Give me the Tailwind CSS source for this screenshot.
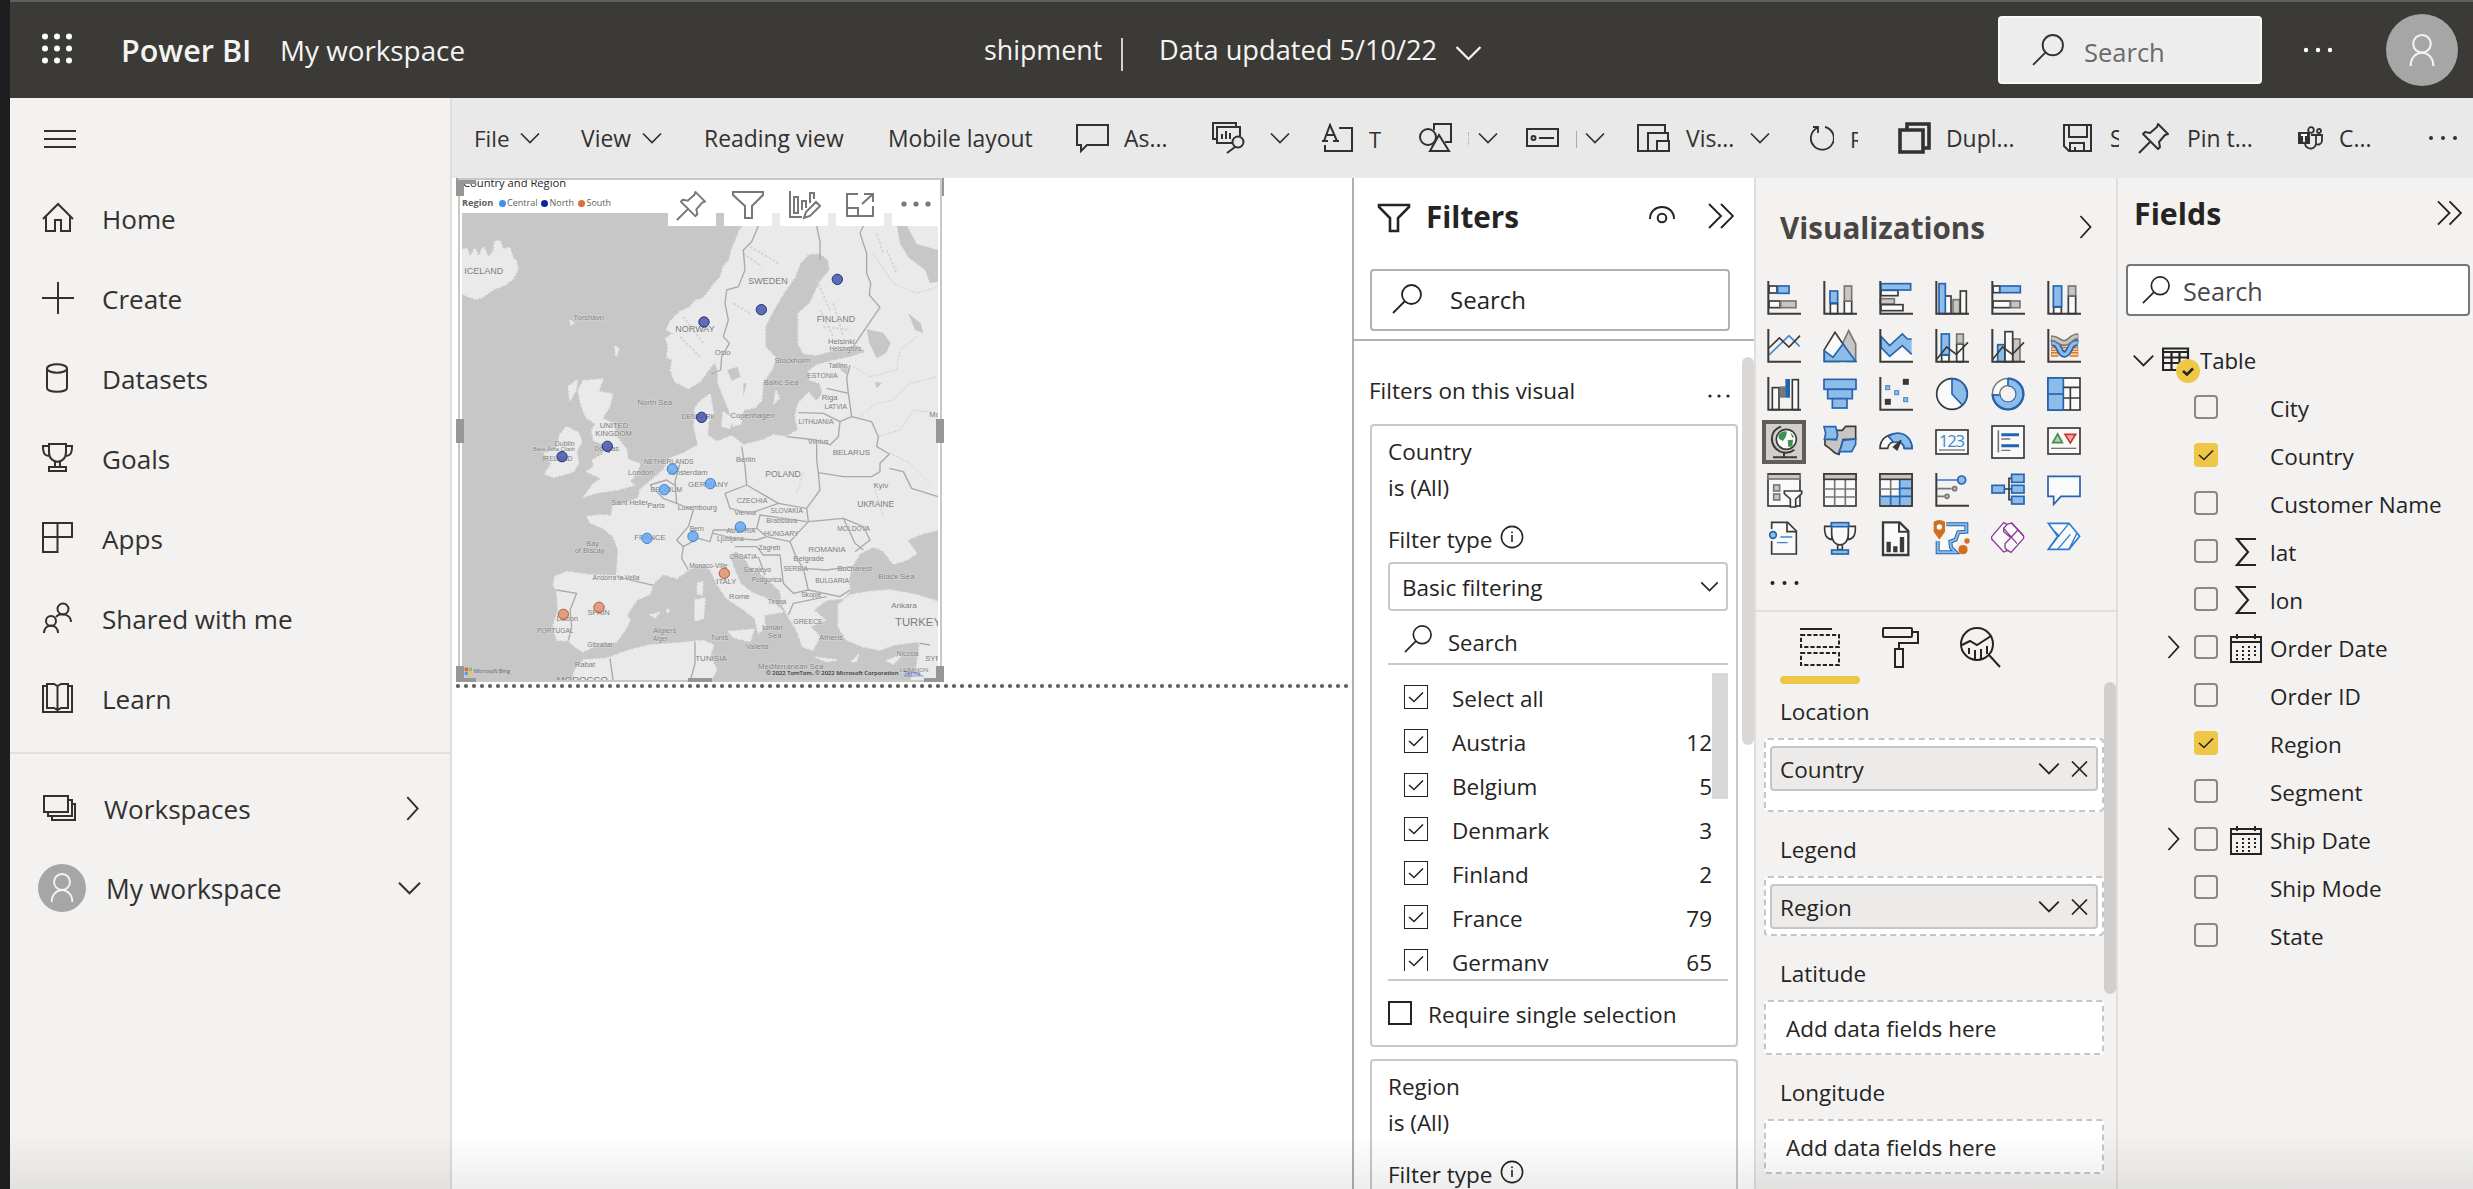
<!DOCTYPE html>
<html lang="en">
<head>
<meta charset="utf-8">
<title>Power BI - shipment</title>
<script src="https://cdn.jsdelivr.net/npm/@tailwindcss/browser@4"></script>
</head>
<body class="w-[2473px] h-[1189px] overflow-hidden bg-[#1c1e1f] font-['Open_Sans',sans-serif] text-[22.5px] text-[#252423] relative">
<svg width="0" height="0" class="absolute">
  <defs>
    <symbol id="down" viewBox="0 0 20 12"><path d="M1 1.5 10 10.5 19 1.5" fill="none" stroke="currentColor" stroke-width="1.7"/></symbol>
    <symbol id="right" viewBox="0 0 12 24"><path d="M1 1 11 12 1 23" fill="none" stroke="currentColor" stroke-width="1.8"/></symbol>
    <symbol id="dbl" viewBox="0 0 26 26"><path d="M1 1 13 13 1 25M13 1 25 13 13 25" fill="none" stroke="currentColor" stroke-width="1.9"/></symbol>
    <symbol id="search" viewBox="0 0 30 30"><g fill="none" stroke="currentColor" stroke-width="1.8"><circle cx="19.5" cy="10.5" r="9.5"/><path d="M12.5 17.5 1 29"/></g></symbol>
    <symbol id="person" viewBox="0 0 24 32"><g fill="none" stroke="currentColor" stroke-width="2"><circle cx="12" cy="9.5" r="8.5"/><path d="M1 31c0-17 22-17 22 0"/></g></symbol>
    <symbol id="pin" viewBox="0 0 32 32"><g fill="none" stroke="currentColor" stroke-width="2" stroke-linejoin="round"><path d="M20 2 30 12 27 13 21 20 22 25 20 27 5 12 7 10 12 11 19 5ZM1 31 12 20"/></g></symbol>
    <symbol id="funnel" viewBox="0 0 34 30"><path d="M2 2H32V4L21 15V28H13V15L2 4Z" fill="none" stroke="currentColor" stroke-width="2.6"/></symbol>
    <symbol id="check" viewBox="0 0 16 12"><path d="M1 6 6 10.5 15 1.5" fill="none" stroke="currentColor" stroke-width="1.6"/></symbol>
  </defs>
</svg>
<div class="ml-[10px] h-full flex flex-col">
  <header class="h-[98px] shrink-0 bg-[#3b3a37] border-t-2 border-[#5c6064] flex items-center text-[#f5f4f3] pb-[2px]">
    <svg class="w-[32px] h-[32px] ml-[31px] shrink-0" viewBox="0 0 32 32" fill="#fff"><circle cx="4" cy="3.500" r="3"/><circle cx="16" cy="3.500" r="3"/><circle cx="28" cy="3.500" r="3"/><circle cx="4" cy="15.500" r="3"/><circle cx="16" cy="15.500" r="3"/><circle cx="28" cy="15.500" r="3"/><circle cx="4" cy="27.500" r="3"/><circle cx="16" cy="27.500" r="3"/><circle cx="28" cy="27.500" r="3"/></svg>
    <span class="ml-[48px] w-[159px] shrink-0 text-[30.500px] font-semibold whitespace-nowrap mt-[3px]">Power BI</span>
    <span class="w-[704px] shrink-0 text-[27.800px] whitespace-nowrap mt-[3px]">My workspace</span>
    <span class="w-[137px] shrink-0 text-[26.800px] mt-[3px]">shipment</span>
    <span class="w-[2px] h-[33px] bg-[#d0cfcd] mt-[10px] mr-[36px] shrink-0"></span>
    <span class="w-[296px] shrink-0 text-[27.200px] whitespace-nowrap mt-[3px]">Data updated 5/10/22</span>
    <svg class="w-[27px] h-[16px] mt-[7px] shrink-0"><use href="#down"/></svg>
    <div class="ml-[516px] mt-[2px] w-[264px] h-[68px] shrink-0 bg-[#ededed] border-2 border-[#f8f8f7] rounded-[4px] flex items-center text-[#333]">
      <svg class="w-[32px] h-[32px] ml-[32px]"><use href="#search"/></svg>
      <span class="ml-[20px] mt-1 text-[25.500px] text-[#6b6a69]">Search</span>
    </div>
    <svg class="w-[32px] h-[6px] ml-[40px] mt-[2px] shrink-0" viewBox="0 0 32 6" fill="#fff"><circle cx="4" cy="3" r="2.200"/><circle cx="16" cy="3" r="2.200"/><circle cx="28" cy="3" r="2.200"/></svg>
    <span class="ml-[52px] mt-[2px] w-[72px] h-[72px] shrink-0 rounded-full bg-[#a6a6a6] flex items-center justify-center"><svg class="w-[28px] h-[33px]"><use href="#person"/></svg></span>
  </header>

  <div class="flex flex-1 min-h-0">
    <nav class="w-[442px] shrink-0 bg-[#f3f2f0] border-r-2 border-[#dedddc] text-[26.100px] text-[#323130]">
      <div class="h-[82px] pl-[34px] flex items-center"><svg class="w-[32px] h-[20px]" viewBox="0 0 32 20" stroke="#323130" stroke-width="2"><path d="M0 2H32M0 10H32M0 18H32"/></svg></div>
      <div id="nav"></div>
      <div class="mt-[12px] h-[2px] bg-[#e1dfdd]"></div>
      <div class="mt-[16px] h-[80px] flex items-center pl-[33px]">
        <svg class="w-[33px] h-[28px] -mt-1" viewBox="0 0 33 28" fill="none" stroke="#323130" stroke-width="2"><path d="M1 2H25V18H1ZM25 6H29V22H5V18M29 10H32V26H9V22"/></svg>
        <span class="ml-[28px] w-[302px]">Workspaces</span><svg class="w-[13px] h-[25px] -mt-1"><use href="#right"/></svg>
      </div>
      <div class="h-[80px] flex items-center pl-[28px]">
        <span class="w-[48px] h-[48px] rounded-full bg-[#a6a6a6] text-[#f5f4f3] flex items-center justify-center -mt-1"><svg class="w-[24px] h-[30px]"><use href="#person"/></svg></span>
        <span class="ml-[20px] w-[291px] text-[26.400px]">My workspace</span><svg class="w-[25px] h-[14px] -mt-1"><use href="#down"/></svg>
      </div>
    </nav>

    <div class="flex-1 min-w-0 flex flex-col">
      <div class="h-[80px] shrink-0 bg-[#e9e9e9] pl-[22px] flex items-center text-[22.900px] text-[#323130] whitespace-nowrap [&>div]:shrink-0 [&>div]:flex [&>div]:items-center [&_span]:shrink-0 [&_svg]:shrink-0 [&_span]:mt-[2px]">
        <div class="w-[107px]"><span class="w-[46px] text-[22.500px]">File</span><svg class="w-[20px] h-[12px]"><use href="#down"/></svg></div>
        <div class="w-[123px]"><span class="w-[61px]">View</span><svg class="w-[20px] h-[12px]"><use href="#down"/></svg></div>
        <div class="w-[184px]"><span>Reading view</span></div>
        <div class="w-[188px]"><span>Mobile layout</span></div>
        <div class="w-[136px]"><svg class="w-[33px] h-[30px]" viewBox="0 0 33 30" fill="none" stroke="currentColor" stroke-width="2"><path d="M1 2H32V22H11L5 28V22H1Z"/></svg><span class="ml-[15px]">As...</span></div>
        <div class="w-[109px]"><svg class="w-[33px] h-[32px]" viewBox="0 0 33 32" fill="none" stroke="currentColor" stroke-width="2"><path d="M5 17H1V1H24V4M20 21H5V5H28V14M10 17V12M14 17V9M18 17V11"/><circle cx="26" cy="20" r="5.500"/><path d="M23 25 15 31"/></svg><svg class="w-[20px] h-[12px] ml-[25px]"><use href="#down"/></svg></div>
        <div class="w-[98px]"><svg class="w-[33px] h-[30px]" viewBox="0 0 33 30" fill="none" stroke="currentColor" stroke-width="2"><path d="M18 5H31V28H4V22M1 18H7M12 18H18M3 18 9 2 16 18M6 12H13"/></svg><span class="ml-[15px] text-[22px]">T</span></div>
        <div class="w-[107px]"><svg class="w-[33px] h-[30px]" viewBox="0 0 33 30" fill="none" stroke="currentColor" stroke-width="2"><path d="M15 7V1H32V19H26"/><circle cx="9" cy="14" r="8"/><path d="M20 12 30 28H11Z"/></svg><span class="ml-[16px] h-[14px] border-l border-dotted border-[#aaa]"></span><svg class="w-[20px] h-[12px] ml-[9px]"><use href="#down"/></svg></div>
        <div class="w-[111px]"><svg class="w-[33px] h-[20px]" viewBox="0 0 33 20" fill="none" stroke="currentColor" stroke-width="2"><path d="M1 1H32V18H1ZM13 10H28"/><circle cx="7.500" cy="10" r="2"/></svg><span class="ml-[17px] h-[17px] border-l border-[#aaa]"></span><svg class="w-[20px] h-[12px] ml-[8px]"><use href="#down"/></svg></div>
        <div class="w-[172px]"><svg class="w-[33px] h-[30px]" viewBox="0 0 33 30" fill="none" stroke="currentColor" stroke-width="2"><path d="M28 9V2H1V28H11M11 28V10H31V17M11 28H20M20 28V18H32V28Z"/></svg><span class="ml-[16px] w-[64px]">Vis...</span><svg class="w-[20px] h-[12px]"><use href="#down"/></svg></div>
        <div class="w-[89px]"><svg class="w-[25px] h-[28px]" viewBox="0 0 25 28" fill="none" stroke="currentColor" stroke-width="1.800"><path d="M16 3A11.500 11.500 0 1 1 8 4M4 3H9V9"/></svg><span class="ml-[16px] w-[8px] overflow-hidden text-[22px]">R</span></div>
        <div class="w-[165px]"><svg class="w-[33px] h-[32px]" viewBox="0 0 33 32" fill="none" stroke="currentColor" stroke-width="3.600"><path d="M9 7V2H31V26H26M2 8H25V30H2Z"/></svg><span class="ml-[15px]">Dupl...</span></div>
        <div class="w-[75px]"><svg class="w-[30px] h-[30px]" viewBox="0 0 30 30" fill="none" stroke="currentColor" stroke-width="2"><path d="M1 2H28V28H6L1 23ZM6 2V14H24V2M7 28V20H21V28M12 28V24"/></svg><span class="ml-[17px] w-[9px] overflow-hidden">S</span></div>
        <div class="w-[160px]"><svg class="w-[32px] h-[32px]"><use href="#pin"/></svg><span class="ml-[17px]">Pin t...</span></div>
        <div class="w-[130px]"><svg class="w-[26px] h-[24px]" viewBox="0 0 26 24"><rect y="6" width="12" height="12" fill="#323130"/><path d="M3 9H9M6 9V16" stroke="#fff" stroke-width="1.800"/><g fill="none" stroke="#323130" stroke-width="1.800"><circle cx="13" cy="4" r="2.800"/><circle cx="21" cy="5" r="2"/><path d="M13 9H18V16A5.500 5.500 0 0 1 7 18M18 9H24V15A4 4 0 0 1 18 18"/></g></svg><span class="ml-[15px]">C...</span></div>
        <div><svg class="w-[32px] h-[6px]" viewBox="0 0 32 6" fill="#323130"><circle cx="3" cy="3" r="2"/><circle cx="15" cy="3" r="2"/><circle cx="27" cy="3" r="2"/></svg></div>
      </div>

      <div class="flex flex-1 min-h-0">
        <!-- report canvas -->
        <main class="w-[900px] shrink-0 bg-white pl-[6px]">
          <div class="w-[484px] h-[504px] border-2 border-[#c8c8c8] px-[2px] relative">
            <div class="h-[33px] overflow-hidden">
              <div class="text-[11.200px] leading-[16px] -mt-[5px] pl-[1px]">Country and Region</div>
              <div class="flex items-center text-[9px] leading-[18px] text-[#605e5c] mt-[3px]"><b class="font-bold w-[36.500px] text-[9.200px]">Region</b><i class="w-[7px] h-[7px] rounded-full bg-[#3b8ff5] mr-[1.500px]"></i><span class="w-[33.500px]">Central</span><i class="w-[7px] h-[7px] rounded-full bg-[#12239e] mr-[2px]"></i><span class="w-[28.500px]">North</span><i class="w-[7px] h-[7px] rounded-full bg-[#d9713f] mr-[1.500px]"></i><span>South</span></div>
            </div>
            <svg id="map" class="w-[476px] h-[467px] block bg-[#c7c7c7]" viewBox="36 129 1428 1401"></svg>
            <div class="absolute top-0 left-[208px] flex gap-[8px] text-[#777] [&>span]:w-[48px] [&>span]:h-[46px] [&>span]:bg-white [&>span]:flex [&>span]:items-center [&>span]:justify-center [&>span]:pt-[4px]">
              <span><svg class="w-[31px] h-[31px] -ml-[2px]"><use href="#pin"/></svg></span>
              <span><svg class="w-[32px] h-[28px]" viewBox="0 0 32 28" fill="none" stroke="currentColor" stroke-width="2"><path d="M1 1H31V4L20 15V27H13V15L1 4Z"/></svg></span>
              <span><svg class="w-[33px] h-[30px]" viewBox="0 0 33 30" fill="none" stroke="currentColor" stroke-width="2"><path d="M2 1V27H14M6 23V7H10V23ZM14 20V11H18V18M22 13V3H26V9M16 28 18 22 28 12 32 16 22 26Z"/></svg></span>
              <span><svg class="w-[30px] h-[26px]" viewBox="0 0 30 26" fill="none" stroke="currentColor" stroke-width="2"><path d="M13 2H2V24H28V14M2 16H13V24M19 2H28V10M28 2 17 12"/></svg></span>
              <span><svg class="w-[32px] h-[6px] -mt-[2px]" viewBox="0 0 32 6" fill="currentColor"><circle cx="4" cy="3" r="2.600"/><circle cx="16" cy="3" r="2.600"/><circle cx="28" cy="3" r="2.600"/></svg></span>
            </div>
            <svg class="absolute -left-[4px] -top-[2px] w-[488px] h-[504px]" viewBox="0 0 488 504" fill="#979797"><path d="M0 0H2V2H20V6H8V18H0ZM486 0H488V18H486ZM0 241H8V265H0ZM480 241H488V265H480ZM0 488H8V500H20V504H0ZM488 488H480V500H468V504H488ZM232 500H256V504H232Z"/></svg>
          </div>
          <svg class="w-[896px] h-[8px] block -ml-[2px]" viewBox="0 0 896 8"><path d="M2 4H896" stroke="#605e5c" stroke-width="4.200" stroke-linecap="round" stroke-dasharray="0 8"/></svg>
        </main>

        <!-- filters -->
        <aside class="w-[402px] shrink-0 bg-white border-l-2 border-[#b3aea9] relative overflow-hidden">
          <div class="h-[91px] pl-[23px] flex items-center pb-[16px]">
            <svg class="w-[34px] h-[30px] mt-[4px]"><use href="#funnel"/></svg>
            <span class="ml-[15px] w-[223px] text-[29.700px] font-bold mt-[4px]">Filters</span>
            <svg class="w-[26px] h-[18px] -mt-[1px]" viewBox="0 0 26 18" fill="none" stroke="currentColor" stroke-width="2"><path d="M1 13C1-3 25-3 25 13"/><circle cx="13" cy="12" r="4.300"/></svg>
            <svg class="w-[26px] h-[26px] ml-[33px] mt-[1px]"><use href="#dbl"/></svg>
          </div>
          <div class="ml-[16px] w-[360px] h-[62px] border-2 border-[#b3b0ad] rounded-[4px] flex items-center"><svg class="w-[30px] h-[30px] ml-[20px] -mt-[2px]"><use href="#search"/></svg><span class="ml-[28px] text-[24px]">Search</span></div>
          <div class="mt-[8px] h-[2px] bg-[#b3b0ad]"></div>
          <div class="mt-[32px] h-[36px] leading-[36px] pl-[15px] flex items-center"><span class="w-[338px]">Filters on this visual</span><svg class="w-[26px] h-[6px] mt-[10px]" viewBox="0 0 26 6" fill="currentColor"><circle cx="3" cy="3" r="1.600"/><circle cx="12" cy="3" r="1.600"/><circle cx="21" cy="3" r="1.600"/></svg></div>
          <section class="ml-[16px] mt-[15px] w-[368px] h-[623px] border-2 border-[#c8c8c8] rounded-[4px] px-[16px] pt-[8px] leading-[36px]">
            <div>Country</div><div>is (All)</div>
            <div class="mt-[16px] flex items-center"><span>Filter type</span><svg class="w-[24px] h-[24px] ml-[8px] -mt-[6px]" viewBox="0 0 24 24" fill="none" stroke="currentColor" stroke-width="1.600"><circle cx="12" cy="12" r="10.600"/><path d="M12 10V17M12 6.500V8.300"/></svg></div>
            <div class="mt-[4px] w-[340px] h-[49px] border-2 border-[#c8c8c8] rounded-[4px] flex items-center pl-[12px]"><span class="w-[298px] mt-[2px]">Basic filtering</span><svg class="w-[19px] h-[11px]"><use href="#down"/></svg></div>
            <div class="w-[340px] h-[54px] border-b-2 border-[#c8c8c8] flex items-center pl-[16px]"><svg class="w-[28px] h-[28px] mt-[3px]"><use href="#search"/></svg><span class="ml-[16px] mt-[9px] text-[22px]">Search</span></div>
            <div class="w-[340px] h-[306px] overflow-hidden pt-[10px] relative">
              <div id="countries"></div>
              <div class="absolute right-0 top-[8px] w-[16px] h-[126px] bg-[#d8d8d8]"></div>
            </div>
            <div class="mt-[8px] w-[340px] h-[2px] bg-[#c8c8c8]"></div>
            <div class="h-[64px] flex items-center"><i class="w-[24px] h-[24px] border-2 border-[#252423]"></i><span class="ml-[16px] mt-[4px] text-[22.600px]">Require single selection</span></div>
          </section>
          <section class="ml-[16px] mt-[12px] w-[368px] h-[400px] border-2 border-[#c8c8c8] rounded-[4px] px-[16px] pt-[8px] leading-[36px]">
            <div>Region</div><div>is (All)</div>
            <div class="mt-[16px] flex items-center"><span>Filter type</span><svg class="w-[24px] h-[24px] ml-[8px] -mt-[6px]" viewBox="0 0 24 24" fill="none" stroke="currentColor" stroke-width="1.600"><circle cx="12" cy="12" r="10.600"/><path d="M12 10V17M12 6.500V8.300"/></svg></div>
          </section>
          <div class="absolute right-0 top-[179px] w-[12px] h-[388px] rounded-full bg-[#d9d8d7]"></div>
        </aside>

        <!-- visualizations -->
        <aside class="w-[364px] shrink-0 bg-[#f3f2f1] border-x-2 border-[#e1dfdd] relative overflow-hidden">
          <div class="h-[98px] pl-[24px] pt-[3px] flex items-center"><span class="w-[299px] text-[29.600px] font-bold text-[#484644]">Visualizations</span><svg class="w-[13px] h-[24px] -mt-[3px]"><use href="#right"/></svg></div>
          <div id="viz" class="grid grid-cols-[repeat(6,56px)] auto-rows-[48px] pl-[6px]"></div>
          <svg class="w-[34px] h-[6px] ml-[14px] mt-[16px] block" viewBox="0 0 34 6" fill="#252423"><circle cx="2.500" cy="3" r="2"/><circle cx="14.500" cy="3" r="2"/><circle cx="26.500" cy="3" r="2"/></svg>
          <div class="mt-[24px] h-[2px] bg-[#e1dfdd]"></div>
          <div class="h-[72px] flex pl-[24px] relative">
            <div class="w-[80px] flex flex-col items-center pt-[16px]"><svg class="w-[40px] h-[38px]" viewBox="0 0 40 38" fill="none" stroke="#252423" stroke-width="2"><path d="M0 1H32"/><path d="M1 7H39V19H1ZM1 25H39V37H1Z" stroke-dasharray="4.200 2"/></svg><i class="mt-[10px] w-[80px] h-[8px] rounded-full bg-[#eec746]"></i></div>
            <svg class="w-[37px] h-[42px] ml-[22px] mt-[15px]" viewBox="0 0 37 42" fill="none" stroke="#252423" stroke-width="2"><rect x="1" y="1" width="29" height="9" rx="1"/><path d="M30 5H36V16H17V22"/><rect x="13" y="22" width="8" height="18"/></svg>
            <svg class="w-[41px] h-[42px] ml-[41px] mt-[15px]" viewBox="0 0 41 42" fill="none" stroke="#252423" stroke-width="2"><circle cx="17" cy="17" r="16"/><path d="M29 28 40 40M2 18 10 14 17 18 31 9M9 27V21M15 32V23M21 32V22M27 27V19"/></svg>
          </div>
          <div id="wells" class="pl-[8px]"></div>
          <div class="absolute right-0 top-[504px] w-[12px] h-[312px] rounded-full bg-[#d0cfcd]"></div>
        </aside>

        <!-- fields -->
        <aside class="flex-1 min-w-0 bg-[#f3f2f1] overflow-hidden">
          <div class="h-[86px] flex items-center pl-[16px]"><span class="w-[303px] text-[30.300px] font-bold -mt-[14px]">Fields</span><svg class="w-[25px] h-[26px] -mt-[17px]"><use href="#dbl"/></svg></div>
          <div class="ml-[8px] w-[344px] h-[52px] border-2 border-[#777] rounded-[4px] bg-white flex items-center"><svg class="w-[28px] h-[28px] ml-[14px]"><use href="#search"/></svg><span class="ml-[13px] mt-[4px] text-[25.200px] text-[#4a4948]">Search</span></div>
          <div class="mt-[20px] h-[48px] flex items-center pl-[14px]"><svg class="w-[23px] h-[13px]"><use href="#down"/></svg>
            <svg class="w-[38px] h-[38px] ml-[7px] mt-[10px]" viewBox="0 0 38 38"><path d="M1 2.500H26V24H1ZM1 6H26M1 11.500H26M1 17H26M9.500 6V24M17.500 6V24" fill="none" stroke="#252423" stroke-width="2.200"/><circle cx="26" cy="25" r="12" fill="#eec746"/><path d="M21 25 25 28.500 31 22.500" fill="none" stroke="#252423" stroke-width="2.600"/></svg>
            <span class="mt-[2px] text-[22.200px]">Table</span></div>
          <div id="fields"></div>
        </aside>
      </div>
    </div>
  </div>
</div>
<div class="absolute bottom-0 left-[10px] right-0 h-[56px] bg-gradient-to-b from-black/0 to-black/7"></div>

<script>
const $ = id => document.getElementById(id);

/* left navigation */
const nav = [
  ['Home','<path d="M1 17 16 2 31 17M4 14V29H13V18H19V29H28V14"/>'],
  ['Create','<path d="M16 0V32M0 16H32"/>'],
  ['Datasets','<ellipse cx="15" cy="6.500" rx="10" ry="4.200"/><path d="M5 6.500V26C5 31 25 31 25 26V6.500"/>'],
  ['Goals','<path d="M7 2H24V10C24 23 7 23 7 10ZM7 4H1C1 12 3 14 8 14M24 4H30C30 12 28 14 23 14M13 20V24M18 20V24M7 29V25H24V29Z"/>'],
  ['Apps','<path d="M1 1H30V15H1ZM15.500 1V30H1V15"/>'],
  ['Shared with me','<circle cx="21" cy="7" r="5.500"/><path d="M14 15C18 10 29 12 29 20"/><circle cx="9" cy="19" r="5"/><path d="M2 31C2 21 16 21 16 31"/>'],
  ['Learn','<path d="M5 4H1V30H30V4H26M5 2H12L15.500 4 19 2H26V26H19L15.500 28 12 26H5ZM15.500 4V28"/>']];
$('nav').innerHTML = nav.map(([t,p]) => `<div class="h-[80px] flex items-center pl-[32px]"><svg class="w-[32px] h-[32px] -mt-1 shrink-0" viewBox="0 0 32 32" fill="none" stroke="#323130" stroke-width="2">${p}</svg><span class="ml-[28px]">${t}</span></div>`).join('');

/* country filter values */
$('countries').innerHTML = [['Select all',''],['Austria',12],['Belgium',5],['Denmark',3],['Finland',2],['France',79],['Germany',65]].map(([t,n]) =>
 `<div class="h-[44px] flex items-center pl-[16px]"><i class="w-[24px] h-[24px] border-[1.500px] border-[#252423] flex items-center justify-center"><svg class="w-[16px] h-[12px]"><use href="#check"/></svg></i><span class="ml-[24px] mt-[4px] w-[190px]">${t}</span><span class="w-[70px] mt-[4px] text-right">${n}</span></div>`).join('');

/* field wells */
const pill = t => `<div class="mx-[4px] mt-[6px] h-[45px] w-[328px] border-2 border-[#c8c6c4] rounded-[4px] bg-[#edebe9] flex items-center pl-[8px]"><span class="w-[257px] mt-[3px]">${t}</span><svg class="w-[24px] h-[13px]"><use href="#down"/></svg><svg class="w-[17px] h-[16px] ml-[10px]" viewBox="0 0 17 16"><path d="M1 0.500 16 15.500M16 0.500 1 15.500" stroke="#252423" stroke-width="1.700"/></svg></div>`;
const empty = '<div class="pl-[20px] pt-[3px] h-full flex items-center">Add data fields here</div>';
$('wells').innerHTML = [['Location','h-[74px]',pill('Country')],['Legend','h-[60px]',pill('Region')],['Latitude','h-[55px]',empty],['Longitude','h-[55px]',empty]].map(([t,h,c]) =>
 `<div class="pt-[10px] pb-[10px]"><div class="pl-[16px] leading-[36px] mb-[8px]">${t}</div><div class="w-[340px] ${h} bg-white border-2 border-dashed border-[#c8c6c4] rounded-[4px]">${c}</div></div>`).join('');

/* fields list */
const sigma = '<svg class="w-[32px] h-[30px]" viewBox="0 0 32 30"><path d="M26 2H7L18 15 7 28H26" fill="none" stroke="#252423" stroke-width="2.200"/></svg>';
const cal = '<svg class="w-[32px] h-[30px]" viewBox="0 0 32 30" fill="none" stroke="#252423" stroke-width="2"><path d="M1 4H31V29H1ZM1 9H31M7 1V6M25 1V6"/><path d="M7 17V27M13 13V27M19 13V27M25 13V24" stroke-dasharray="2 2"/></svg>';
$('fields').innerHTML = [['City'],['Country',1],['Customer Name'],['lat',0,sigma],['lon',0,sigma],['Order Date',0,cal,1],['Order ID'],['Region',1],['Segment'],['Ship Date',0,cal,1],['Ship Mode'],['State']].map(([t,on,ic,ex]) =>
 `<div class="h-[48px] flex items-center pl-[49px]"><span class="w-[27px] pb-[2px]">${ex?'<svg class="w-[13px] h-[24px]"><use href="#right"/></svg>':''}</span>${on?'<i class="w-[24px] h-[24px] -mt-[2px] rounded-[4px] bg-[#eec746] flex items-center justify-center"><svg class="w-[16px] h-[12px]"><use href="#check"/></svg></i>':'<i class="w-[24px] h-[24px] -mt-[2px] rounded-[4px] border-2 border-[#8a8886]"></i>'}<span class="ml-[12px] w-[40px]">${ic||''}</span><span class="whitespace-nowrap mt-[2px]">${t}</span></div>`).join('');

/* visual gallery, each glyph on a 102 unit square */
const D='#3b3a39', G='#797775', B='#2464b0', b='#8dbce8', g='#c8c6c4', w='#fafafa', L='#3f87c9';
const r=(x,y,W,H,f,s,k=5)=>`<rect x="${x}" y="${y}" width="${W}" height="${H}" fill="${f}" stroke="${s}" stroke-width="${k}"/>`;
const p=(d,f,s,k=5)=>`<path d="${d}" fill="${f}" stroke="${s}" stroke-width="${k}"/>`;
const c=(x,y,R,f,s,k=5)=>`<circle cx="${x}" cy="${y}" r="${R}" fill="${f}" stroke="${s}" stroke-width="${k}"/>`;
const ax=p('M4 0V98H102','none',D,6);
const ln=p('M4 92 35 54 64 76 99 40','none',D);
const viz=[
 r(6,15,24,21,w,D)+r(32,15,34,22,b,B)+r(6,60,33,20,w,D)+r(41,60,46,20,g,G)+ax,
 r(22,68,22,30,w,D)+r(21,30,23,36,b,B)+r(64,60,22,38,w,D)+r(64,15,22,45,g,G)+ax,
 r(6,28,51,16,w,D)+r(4,53,42,16,g,G)+r(6,71,66,18,w,D)+r(5,8,90,19,b,B)+ax,
 r(30,45,18,53,w,D)+r(54,56,20,42,g,G)+r(76,30,18,68,w,D)+r(12,8,19,90,b,B)+ax,
 r(6,15,20,20,w,D)+r(27,15,61,20,b,B)+r(6,60,52,20,w,D)+r(59,60,28,20,g,G)+ax,
 r(20,78,23,20,w,D)+r(19,15,25,62,b,B)+r(64,45,22,53,w,D)+r(64,15,22,29,g,G)+ax,
 p('M6 78 66 20 98 52','none',L)+p('M6 57 37 27 66 54 99 20','none',D)+ax,
 p('M58 45 77 5 98 45V97H70Z',g,G)+p('M4 97V62L36 10 62 48 50 97Z',w,D)+p('M4 97V65L30 85 60 45 98 97Z',b,B),
 `<path d="M6 50 32 82 70 50 100 75V98H6Z" fill="${w}"/>`+p('M98 30H85L70 15 32 50 6 22V55L32 82 70 50 98 76',b,B)+ax,
 r(20,78,22,20,w,D)+r(19,15,24,62,b,B)+r(65,45,20,53,w,D)+r(65,15,20,28,g,G)+ln+ax,
 r(20,47,22,51,b,B)+r(66,30,21,68,g,G)+r(42,8,23,90,w,D)+ln+ax,
 p('M12 60H32M40 60H62M70 60H94M12 76H34M68 76H94','none','#d9772b',14)+p('M14 60H30M42 60H60M72 60H92M14 76H32M70 76H92','none','#fbd9a5',5)+p('M12 42C40 38 34 76 52 76S66 38 94 42','none',B,20)+p('M14 42C40 38 34 76 52 76S66 38 92 42','none',b,10)+p('M12 28C35 28 34 42 52 42S70 22 94 22','none',G,19)+p('M14 28C35 28 34 42 52 42S70 22 92 22','none',g,9)+ax,
 r(16,32,20,66,w,D)+`<rect x="38" y="28" width="18" height="34" fill="${G}"/><rect x="55" y="6" width="14" height="56" fill="${B}"/>`+r(76,8,18,90,w,D)+ax,
 r(3,7,96,30,b,B)+r(14,37,74,28,b,B)+r(28,65,44,28,b,B),
 ax+r(74,8,13,13,D,D)+r(20,26,12,12,b,L,3)+r(47,41,12,12,b,L,3)+r(74,62,12,12,b,L,3)+r(20,68,13,13,D,D),
 c(51,51,46,w,D)+p('M51 5A46 46 0 0 1 82 84L51 51Z',b,B),
 c(51,51,36,'none',G,26)+c(51,51,36,'none',w,17)+p('M51 15A36 36 0 1 1 15 51','none',B,27)+p('M51 17A34 34 0 1 1 17 51','none',b,17)+p('M4 54H26','none',B)+p('M51 3V26','none',B),
 r(3,3,96,96,w,D)+r(3,3,46,96,b,B)+p('M3 51H49','none',B)+p('M49 31H99M49 63H70M70 63H99M70 31V99','none',D),
 c(58,43,30,w,D)+`<path d="M34 30C42 20 52 16 60 20L56 36 48 48 36 42ZM62 46 78 44 76 64 64 66ZM70 22 82 36 76 38Z" fill="#3f8f4f"/>`+p('M42 5C8 16 4 62 40 80C58 86 72 82 82 74M51 82V96M18 97H90','none',D,6),
 p('M40 16H58L68 4H98V42L60 44 48 88 36 84 20 70 6 60V42L40 44Z',g,D)+p('M3 5H38L44 30 40 43H4L8 25Z',b,B)+p('M60 46 98 42V58L86 80H48L54 68Z',b,B),
 p('M3 70C3 12 99 12 99 70H76C72 42 30 42 26 70Z',w,D)+p('M28 34C60 12 98 30 99 70H76C74 56 64 48 44 52Z',b,B)+p('M44 66 66 46 54 74Z',D,D),
 r(3,15,96,72,w,D)+`<text x="51" y="67" text-anchor="middle" font-size="50" fill="${L}" textLength="78" font-family="Open Sans, sans-serif">123</text>`+p('M12 75H90','none',G,4),
 r(3,3,96,96,w,D)+p('M22 16V82','none',G)+p('M31 29H84M31 62H84','none',B,9)+p('M31 42H58M31 76H58','none',G,4),
 r(3,9,96,78,w,D)+p('M17 53 32 27 46 53Z','#a7d6a4','#3f8f4f')+p('M54 28H86L70 54Z','#f2aaa8','#c9342c')+p('M12 70H88','none',G,4),
 r(3,3,96,96,w,D)+r(3,3,96,15,g,G)+r(20,36,18,18,g,G)+r(20,63,18,18,g,G)+p('M52 54H104V62L86 78V102H70V78L52 62Z',w,D)+p('M3 3H99','none',D),
 r(3,3,96,96,w,D)+p('M3 48H99M3 72H99M35 18V99M67 18V99','none',G)+r(3,3,96,16,g,D),
 r(3,3,96,96,w,D)+p('M3 48H60M35 18V70','none',G)+`<path d="M62 20H97V97H5V70H62Z" fill="${b}"/>`+p('M5 70H97M62 20V97M35 70V97M62 46H97','none',B)+r(3,3,96,16,g,D)+p('M99 18V99H3','none',D),
 ax+p('M6 21H66','none',L)+c(80,21,12,b,B)+p('M6 47H50M6 70H28','none',G)+c(59,47,6,g,G)+c(36,70,6,g,G),
 p('M40 48H56M64 16H54V80H64M54 48H64','none',D)+r(3,37,37,23,b,B)+r(62,4,37,24,b,B)+r(62,37,37,23,b,B)+r(62,70,37,23,b,B),
 p('M3 10H99V70H42L20 94V70H3Z',w,B),
 p('M14 4H62L88 30V99H14Z',w,D)+p('M60 4V32H88','none',D)+`<rect x="8" y="24" width="10" height="36" fill="#f3f2f1"/>`+c(18,42,10,b,B)+p('M40 48H76M30 65H62','none',L,4),
 p('M26 12V40C26 82 76 82 76 40V12ZM26 16H5C4 40 8 54 30 56M76 16H97C98 40 94 54 72 56M44 72V86H58V72',w,D)+r(25,5,52,12,b,B)+r(26,87,50,12,b,B),
 p('M12 4H62L88 30V102H12Z',w,D,7)+p('M60 4V32H86','none',D,6)+p('M29 94V62M49 94V76M69 94V48','none',D,13),
 `<path d="M36 6H99V40L78 50 68 66 56 76 60 98H6V50L40 60Z" fill="${w}"/>`+p('M34 10H94V32L70 34 62 56 46 62 48 80 62 94H8V60','none',B,12)+p('M34 10H94V32L70 34 62 56 46 62 48 80 62 94H8V60','none',b,6)+`<path d="M-4 2Q13-8 30 2V32L13 56-4 32Z" fill="#d0701f"/><circle cx="13" cy="18" r="8" fill="#fff"/><circle cx="84" cy="86" r="14" fill="#d0701f"/><circle cx="96" cy="60" r="8" fill="#d0701f"/>`,
 p('M38 5 2 47 2 54 38 93 50 88 60 94 98 52V45L62 6 48 10Z',w,'#8a3a9a',4)+p('M48 10 38 22 78 68M62 6 98 45M80 28 42 68V80L50 90M38 22V32L60 50','none','#8a3a9a',4),
 p('M4 7H66L98 46 66 85H4L32 46Z',w,'#2b7cd3')+p('M22 30 38 46M32 85 70 40M66 7 36 44 4 85M66 85 90 36','none','#2b7cd3',4)];
$('viz').innerHTML = viz.map((s,i) => i===18
 ? `<div class="flex items-center justify-center w-[44px] h-[44px] border-4 border-[#605e5c] bg-[#d0cfcd]"><svg class="w-[34px] h-[34px] shrink-0" viewBox="0 0 102 102">${s}</svg></div>`
 : `<div class="pl-[5px] pt-[5px]"><svg class="w-[34px] h-[34px] overflow-visible" viewBox="0 0 102 102">${s}</svg></div>`).join('');

/* map of Europe */
const land = [
 'M36 240 50 235 60 262 75 235 85 262 100 230 115 262 130 245 135 215 150 212 160 240 178 232 188 262 200 275 203 300 190 325 165 345 130 358 100 380 80 388 50 378 36 370Z',
 'M905 129 870 180 845 240 838 270 820 290 812 320 790 345 760 385 735 392 720 412 690 425 660 455 650 480 672 490 648 505 655 530 650 560 668 570 662 600 675 635 715 655 750 635 775 600 795 575 803 600 805 640 825 690 845 740 850 768 872 762 880 720 915 712 935 690 938 640 965 598 978 565 945 530 945 470 965 430 1000 370 1035 320 1050 280 1075 252 1110 250 1135 270 1140 300 1110 335 1080 400 1045 430 1045 520 1060 550 1100 555 1150 540 1220 525 1250 545 1200 562 1150 572 1100 585 1075 605 1080 630 1110 640 1118 670 1100 695 1075 668 1045 700 1035 740 1045 780 1010 800 970 795 940 810 880 825 845 798 800 815 772 795 775 755 790 730 780 672 750 695 735 715 732 770 745 825 700 850 660 865 640 900 600 935 570 960 565 985 510 1003 488 1008 485 1038 450 1035 412 1040 420 1058 460 1075 490 1100 505 1140 500 1218 420 1215 350 1205 315 1220 310 1245 320 1260 325 1320 310 1365 320 1410 355 1412 375 1430 400 1445 440 1425 500 1415 525 1380 540 1350 530 1335 560 1290 600 1272 610 1240 640 1212 680 1225 715 1200 750 1180 782 1200 800 1240 830 1285 880 1318 915 1345 925 1390 945 1370 942 1335 1000 1325 960 1290 905 1268 870 1240 850 1190 840 1160 855 1142 878 1155 900 1190 945 1220 990 1262 1000 1310 1015 1340 1040 1380 1058 1430 1088 1440 1110 1400 1080 1370 1125 1350 1090 1320 1130 1290 1180 1285 1200 1262 1195 1230 1205 1190 1230 1150 1270 1130 1300 1142 1330 1182 1370 1170 1400 1150 1370 1110 1420 1090 1464 1080V129Z',
 'M1165 1305 1200 1275 1260 1265 1320 1260 1400 1275 1464 1295V1425L1400 1415 1330 1425 1290 1440 1240 1430 1190 1410 1165 1370Z',
 'M1410 1420H1464V1536H1380L1400 1490Z','M1310 1472 1355 1455 1330 1482Z',
 'M365 1536 375 1500 400 1470 470 1465 540 1440 600 1425 680 1420 760 1412 790 1425 780 1460 800 1500 780 1536Z',
 'M835 1385 912 1378 900 1415 850 1402Z','M735 1290 765 1285 760 1345 735 1352Z','M743 1240 758 1235 756 1275 742 1270Z','M1098 1462 1160 1470 1130 1475Z','M1205 1475 1225 1455 1218 1475Z',
 'M400 632 458 628 445 665 487 672 478 712 455 745 488 760 500 800 530 840 532 868 570 882 560 910 538 935 553 945 500 960 440 968 402 980 430 942 455 925 410 905 432 890 428 870 460 852 462 822 432 812 425 780 438 762 408 742 392 700 385 660Z',
 'M355 650 382 630 378 660 360 690Z','M330 795 350 770 385 788 395 815 380 842 385 880 370 905 310 922 285 912 305 880 283 850 318 840Z',
 'M820 728 852 745 838 775 815 768Z','M978 662 988 685 972 700Z','M495 530 507 535 498 560ZM360 452 372 458 364 465ZM600 1335 628 1328 615 1342ZM650 1318 660 1322 652 1328Z'];
const sea = ['M1335 135 1370 165 1400 222 1464 240V335L1440 340 1425 300 1375 262 1350 220Z','M1250 478 1300 488 1322 520 1308 550 1280 565 1258 520Z','M1375 430 1412 460 1420 490 1395 480Z','M832 600 862 590 872 620 845 632Z','M880 640 890 640 880 680Z','M1165 575 1195 590 1190 615 1172 600Z','M1275 635 1295 640 1280 655Z','M1205 1255 1235 1265 1200 1272Z'];
const border = 'M925 168 905 215 880 240 885 300 865 350 830 360 825 400 835 450 820 500 838 520 815 560 812 600 785 612M1100 168 1110 215V270M1240 168 1230 190 1250 250 1250 310 1262 340 1258 375 1290 412 1240 485 1210 530M1200 585 1190 625 1195 670 1130 655M1195 670 1205 740 1170 755 1120 730 1045 728M1170 755 1165 800 1140 825 1100 810 1010 800M1205 740 1265 755 1285 800 1280 830 1318 852 1290 880V905L1265 920 1180 920 1105 908 1100 870 1100 810M1318 895 1360 905 1385 955 1464 980M875 830 885 890 890 945 825 970 840 1015 900 1030 985 1000 890 945M985 1000 1070 1015 1110 960 1105 908M1070 1015 1075 1055 1020 1115 950 1100 920 1075 930 1035 1070 1055M1075 1055 1180 1045 1215 1120 1240 1140M1180 1045 1240 1070 1260 1110 1215 1145M1020 1115 1040 1165 1060 1195 1130 1200 1205 1190M1060 1195 1075 1260 1170 1280 1200 1260M715 1070 730 1020 680 1000 675 935 690 880M600 945 650 930 680 950M600 945 640 985 680 1000M715 1070 680 1110 700 1130 745 1105 780 1115 790 1080 860 1080 920 1075M790 1090 850 1105 920 1110 950 1100M700 1130 695 1165 715 1200M320 1260 380 1270 360 1320 365 1370 355 1412M500 1220 610 1246M480 1465 490 1536M735 1415 735 1480 720 1536M855 1130 920 1130 940 1155 990 1155 1000 1240M925 1160 945 1215M1000 1240 1030 1270 1075 1260M1015 1335 1030 1300 1130 1280M1410 1420 1440 1425M1380 1500 1420 1520';
const soft='M1210 590 1260 620 1340 600 1350 540 1400 500M1230 740 1280 700 1330 690 1380 640 1464 620M1285 800 1350 780 1390 720 1464 730M1320 850 1380 880 1440 940M1270 250 1330 340 1400 370 1464 350M1060 905 1040 970M1270 940 1300 1040';
const labels=[['ICELAND',101,313,27],['Tórshavn',416,451,22],['NORWAY',735,487,27],['SWEDEN',954,343,27],['FINLAND',1158,457,27],['Helsinki',1174,521,23],['Helsingfors',1186,544,19],['Oslo',818,555,23],['Stockholm',1027,580,23],['Tallinn',1164,595,20],['ESTONIA',1117,624,21],['Baltic Sea',993,645,23],['North Sea',614,704,23],['Riga',1139,690,23],['LATVIA',1157,717,20],['DENMARK',745,747,20],['Copenhagen',907,745,23],['LITHUANIA',1098,763,20],['Vilnius',1105,822,21],['UNITED',492,774,23],['KINGDOM',491,798,23],['Dublin',344,827,21],['Baile Átha Cliath',312,843,17],['IRELAND',322,873,21],['Douglas',470,842,20],['BELARUS',1204,855,24],['NETHERLANDS',656,881,20],['Amsterdam',714,916,23],['Berlin',887,876,23],['London',572,914,23],['POLAND',999,922,26],['GERMANY',775,951,24],['BELGIUM',649,966,21],['Kyiv',1293,955,23],['CZECHIA',906,999,21],['UKRAINE',1277,1011,25],['Saint Helier',539,1005,21],['Paris',618,1014,23],['Luxembourg',742,1020,21],['SLOVAKIA',1010,1029,20],['Vienna',885,1034,21],['Bratislava',995,1059,21],['HUNGARY',994,1097,21],['AUSTRIA',873,1088,20],['MOLDOVA',1211,1083,20],['FRANCE',600,1111,23],['Bern',740,1083,20],['Ljubljana',841,1112,20],['Zagreb',958,1139,21],['ROMANIA',1131,1146,24],['CROATIA',880,1167,19],['Belgrade',1076,1172,23],['Monaco-Ville',775,1193,20],['SERBIA',1037,1202,20],['Sarajevo',922,1205,21],['Bucharest',1214,1202,23],['Black Sea',1339,1227,24],['BULGARIA',1146,1239,20],['Podgorica',950,1235,20],['ITALY',829,1242,23],['Bay',428,1127,22],['of Biscay',419,1149,22],['Andorra la Vella',498,1231,20],['Rome',868,1288,23],['Skopje',1084,1282,20],['Tirana',981,1303,20],['Ankara',1362,1314,24],['Lisbon',352,1352,22],['SPAIN',446,1335,23],['PORTUGAL',316,1388,20],['GREECE',1074,1362,21],['TURKEY',1404,1368,34],['Ionian',967,1379,23],['Sea',974,1403,23],['Athens',1143,1409,23],['Algiers',644,1390,23],['Alger',631,1413,19],['Gibraltar',450,1430,20],['Tunis',808,1410,22],['Valletta',922,1438,21],['Rabat',405,1491,23],['TUNISIA',783,1474,24],['Mediterranean Sea',1022,1498,23],['Nicosia',1373,1459,20],['LEBANON',1392,1505,18],['SYF',1448,1474,23],['MOROCCO',397,1540,29],['Mo',1454,741,23]];
const dots=[[762,456,0],[934,419,0],[1162,328,0],[755,742,0],[472,829,0],[336,860,0],[667,897,1],[781,941,1],[643,959,1],[871,1071,1],[729,1099,1],[591,1105,1],[823,1210,2],[447,1312,2],[340,1333,2]];
const col=[['#4557ae','#232f7c'],['#6aa9f4','#3f82cc'],['#e0916f','#b05a36']];
$('map').innerHTML =
 land.map(d=>`<path d="${d}" fill="#eaeaea" stroke="#eaeaea" stroke-width="5" stroke-linejoin="round" stroke-dasharray="9 4 5 3"/>`).join('')+
 sea.map(d=>`<path d="${d}" fill="#c7c7c7"/>`).join('')+
 `<path d="M880 250 935 290M900 230 985 280M850 400 900 430M1100 330 1140 420M1110 420 1150 500M700 440 760 520M690 500 750 560M1280 190 1300 250M1310 240 1340 310M1120 470 1200 480M1150 400 1180 500" stroke="#d2d2d2" stroke-width="5" stroke-dasharray="8 5" fill="none"/>`+
 `<path d="${soft}" fill="none" stroke="#cfcfcf" stroke-width="3" stroke-dasharray="6 4"/><path d="${border}" fill="none" stroke="#a9a9a9" stroke-width="4" stroke-linejoin="round"/>`+
 labels.map(([t,x,y,s])=>`<text x="${x}" y="${y}" font-size="${s}" text-anchor="middle" font-family="Liberation Sans, sans-serif" fill="#7d7d7d" stroke="#ececec" stroke-opacity=".55" stroke-width="3" paint-order="stroke">${t}</text>`).join('')+
 dots.map(([x,y,k])=>`<circle cx="${x}" cy="${y}" r="15.500" fill="${col[k][0]}" fill-opacity=".85" stroke="${col[k][1]}" stroke-width="3"/>`).join('')+
 `<rect x="44" y="1493" width="10" height="10" fill="#e2643a"/><rect x="56" y="1493" width="10" height="10" fill="#8fbf4d"/><rect x="44" y="1505" width="10" height="10" fill="#4fa6e6"/><rect x="56" y="1505" width="10" height="10" fill="#f1c24b"/>
 <text x="71" y="1510" font-size="17" fill="#666" font-family="Open Sans, sans-serif" textLength="109">Microsoft Bing</text>
 <text x="948" y="1515" font-size="18" font-weight="600" fill="#333" font-family="Open Sans, sans-serif" textLength="397" lengthAdjust="spacingAndGlyphs">© 2022 TomTom, © 2022 Microsoft Corporation</text>
 <text x="1362" y="1514" font-size="18" fill="#3b56c4" text-decoration="underline" font-family="Open Sans, sans-serif" textLength="49" lengthAdjust="spacingAndGlyphs">Terms</text>`;
</script>
</body>
</html>
